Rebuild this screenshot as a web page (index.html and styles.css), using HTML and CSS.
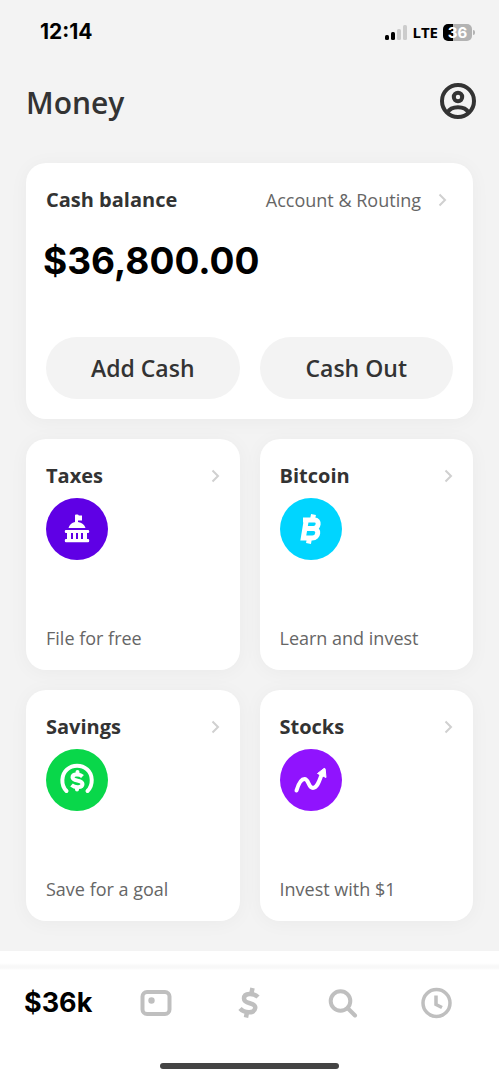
FILE: index.html
```html
<!DOCTYPE html>
<html lang="en">
<head>
<meta charset="utf-8">
<meta name="viewport" content="width=device-width, initial-scale=1">
<title>Money</title>
<link rel="stylesheet" href="styles.css">
</head>
<body>
<div class="app">
  <div class="status">
    <span class="time">12:14</span>
    <div class="signals">
      <svg class="bars" width="22" height="15" viewBox="0 0 22 15" aria-hidden="true">
        <rect x="0" y="10" width="4" height="5" rx="1.500"/>
        <rect x="6" y="7" width="4" height="8" rx="1.500"/>
        <rect class="dim" x="12" y="4" width="4" height="11" rx="1.500"/>
        <rect class="dim" x="18" y="0" width="4" height="15" rx="1.500"/>
      </svg>
      <span class="network">LTE</span>
      <span class="battery">36</span>
    </div>
  </div>

  <header class="header">
    <h1 class="title">Money</h1>
    <button class="icon-button" type="button" aria-label="Profile">
      <svg width="36" height="36" viewBox="0 0 36 36" fill="none" stroke="#333" stroke-width="4" aria-hidden="true">
        <circle cx="18" cy="18" r="16"/>
        <circle cx="18" cy="14" r="4.200" stroke-width="4"/>
        <path d="M7.500 29.500c2-3.800 6-5.300 10.500-5.300s8.500 1.500 10.500 5.300"/>
      </svg>
    </button>
  </header>

  <main class="content">
    <section class="card balance">
      <div class="card-head">
        <h2 class="card-title">Cash balance</h2>
        <a class="routing" href="#">Account &amp; Routing
          <svg class="chevron" width="9" height="14" viewBox="0 0 9 14" aria-hidden="true"><path d="M1.500 1.500 7 7l-5.500 5.500"/></svg>
        </a>
      </div>
      <p class="amount">$36,800.00</p>
      <div class="actions">
        <button class="pill" type="button">Add Cash</button>
        <button class="pill" type="button">Cash Out</button>
      </div>
    </section>

    <div class="tiles">
      <a class="card tile" href="#">
        <div class="card-head">
          <h2 class="card-title">Taxes</h2>
          <svg class="chevron" width="9" height="14" viewBox="0 0 9 14" aria-hidden="true"><path d="M1.500 1.500 7 7l-5.500 5.500"/></svg>
        </div>
        <svg class="badge" viewBox="0 0 62 62" aria-hidden="true">
          <circle cx="31" cy="31" r="31" fill="#5f00e5"/>
          <g fill="#fff">
            <path d="M29 17.500q0-1 1-1h1.500q1 0 1.300 1h3.200v5h-4v1.500c4 .8 6.500 2.800 7.500 6h-17c1-3.200 3.300-5.200 6.500-6z"/>
            <path d="M20 32h22q1.200 0 1.200 1.200v.6q0 1.200-1.200 1.200h-1v6h1q1.200 0 1.200 1.200v.8q0 1.200-1.200 1.200H20q-1.200 0-1.200-1.200v-.8q0-1.200 1.200-1.200h1v-6h-1q-1.200 0-1.200-1.200v-.6q0-1.200 1.200-1.200z"/>
          </g>
          <path d="M26 35v6M31 35v6M36 35v6" stroke="#5f00e5" stroke-width="2"/>
        </svg>
        <p class="caption">File for free</p>
      </a>

      <a class="card tile" href="#">
        <div class="card-head">
          <h2 class="card-title">Bitcoin</h2>
          <svg class="chevron" width="9" height="14" viewBox="0 0 9 14" aria-hidden="true"><path d="M1.500 1.500 7 7l-5.500 5.500"/></svg>
        </div>
        <svg class="badge" viewBox="0 0 62 62" aria-hidden="true">
          <circle cx="31" cy="31" r="31" fill="#00d5ff"/>
          <g fill="none" stroke="#fff" stroke-width="5">
            <path d="M23 22h11.500c5.500 0 4.500 8.500-1 8.500h-7M26.300 22l-3 18h9c6.500 0 7.500-9.500 1.200-9.500"/>
            <path d="M33.500 16.500l-1 5M29.500 40l-1 5.500"/>
          </g>
        </svg>
        <p class="caption">Learn and invest</p>
      </a>

      <a class="card tile" href="#">
        <div class="card-head">
          <h2 class="card-title">Savings</h2>
          <svg class="chevron" width="9" height="14" viewBox="0 0 9 14" aria-hidden="true"><path d="M1.500 1.500 7 7l-5.500 5.500"/></svg>
        </div>
        <svg class="badge" viewBox="0 0 62 62" aria-hidden="true">
          <circle cx="31" cy="31" r="31" fill="#09d74a"/>
          <g fill="none" stroke="#fff" stroke-width="4" stroke-linecap="round">
            <path d="M20.500 42c-6-6-5.200-16.500.5-21.500s14.500-5 20.200 0 6.300 15.500.3 21.500"/>
            <path d="M36.500 27.500c-2.500-2.500-10-3-10 .8 0 4.500 10 2.200 10 6.700 0 4-7.500 4-11 1" stroke-linecap="butt"/>
            <path d="M31.500 23.500v-.5M31 39.500v1"/>
          </g>
        </svg>
        <p class="caption">Save for a goal</p>
      </a>

      <a class="card tile" href="#">
        <div class="card-head">
          <h2 class="card-title">Stocks</h2>
          <svg class="chevron" width="9" height="14" viewBox="0 0 9 14" aria-hidden="true"><path d="M1.500 1.500 7 7l-5.500 5.500"/></svg>
        </div>
        <svg class="badge" viewBox="0 0 62 62" aria-hidden="true">
          <circle cx="31" cy="31" r="31" fill="#9013fe"/>
          <path d="M16.500 41.500c1.500-5 4.200-11.500 8-11.500 4.500 0 3.500 9 8.500 9 4 0 6-6 8.500-13" fill="none" stroke="#fff" stroke-width="4" stroke-linecap="round"/>
          <path d="M37.500 24.500l6.500-5q1-.5 1.200.7l.8 8.300z" fill="#fff" stroke="#fff" stroke-linejoin="round"/>
        </svg>
        <p class="caption">Invest with $1</p>
      </a>
    </div>
  </main>

  <footer class="dock">
    <nav class="tabs" aria-label="Main">
      <a class="tab tab-money" href="#">$36k</a>
      <a class="tab" href="#" aria-label="Card">
        <svg width="32" height="32" viewBox="0 0 32 32" fill="none" stroke="#bfbfbf" stroke-width="4" aria-hidden="true">
          <rect x="2.500" y="5" width="27" height="22" rx="4.500"/><circle cx="11.500" cy="13.500" r="3.200" fill="#bfbfbf" stroke="none"/>
        </svg>
      </a>
      <a class="tab" href="#" aria-label="Pay">
        <svg width="32" height="32" viewBox="0 0 32 32" fill="none" stroke="#bfbfbf" stroke-width="4.500" aria-hidden="true">
          <path d="M25 10c-4-4-14-4.500-14 1.500 0 6.500 12 3 11.200 9.500-.8 6-11 5-15.200.5"/><path d="M19.500 1l-1 5M14 25l-1 5.500"/>
        </svg>
      </a>
      <a class="tab" href="#" aria-label="Search">
        <svg width="32" height="32" viewBox="0 0 32 32" fill="none" stroke="#bfbfbf" stroke-width="4" stroke-linecap="round" aria-hidden="true">
          <circle cx="13.500" cy="14" r="9.800"/><path d="M21 21.500l7 7"/>
        </svg>
      </a>
      <a class="tab" href="#" aria-label="Activity">
        <svg width="32" height="32" viewBox="0 0 32 32" fill="none" stroke="#bfbfbf" stroke-width="3.500" aria-hidden="true">
          <circle cx="16.500" cy="16" r="13.500"/><path d="M16 8.500V17.500l6 3"/>
        </svg>
      </a>
    </nav>
    <div class="home-bar"></div>
  </footer>
</div>
</body>
</html>
```
FILE: styles.css
```css
* {
  box-sizing: border-box;
}

body {
  margin: 0;
  background: #f3f3f3;
  color: #333;
  font-family: "Open Sans", "Noto Sans", sans-serif;
}

h1, h2, p {
  margin: 0;
}

a {
  color: inherit;
  text-decoration: none;
}

button {
  padding: 0;
  border: 0;
  background: none;
  color: inherit;
  font: inherit;
}

svg {
  display: block;
  flex: none;
}

.app {
  display: flex;
  flex-direction: column;
  min-height: 100vh;
}

.status {
  display: flex;
  align-items: center;
  justify-content: space-between;
  padding: 20px 24px 20px 40px;
  color: #000;
  font-family: Inter, sans-serif;
  line-height: 24px;
}

.time {
  font-size: 21px;
  font-weight: 700;
}

.signals {
  display: flex;
  align-items: center;
  gap: 5px;
}

.bars .dim {
  fill: #ccc;
}

.network {
  font-family: "Open Sans", sans-serif;
  font-size: 15px;
  font-weight: 700;
}

.battery {
  position: relative;
  width: 29px;
  margin-right: 3px;
  border-radius: 5px;
  background: linear-gradient(90deg, #000 36%, #b3b3b3 36%);
  color: #fff;
  font-size: 15px;
  font-weight: 700;
  line-height: 17px;
  text-align: center;
}

.battery::after {
  content: "";
  position: absolute;
  top: 6px;
  right: -3px;
  width: 2px;
  height: 5px;
  border-radius: 0 2px 2px 0;
  background: #b3b3b3;
}

.header {
  display: flex;
  align-items: flex-start;
  justify-content: space-between;
  padding: 19px 23px 40px 26px;
}

.title {
  font-size: 30px;
  font-weight: 600;
  line-height: 40px;
}

.content {
  display: flex;
  flex: 1;
  flex-direction: column;
  gap: 20px;
  padding: 0 26px 30px;
}

.card {
  border-radius: 20px;
  background: #fff;
  box-shadow: 0 2px 20px rgba(0, 0, 0, 0.04);
}

.balance {
  padding: 24px 20px 20px;
}

.card-head {
  display: flex;
  align-items: center;
  justify-content: space-between;
}

.card-title {
  font-size: 20px;
  font-weight: 700;
  line-height: 26px;
}

.chevron {
  fill: none;
  stroke: #d0d0d0;
  stroke-width: 2;
}

.routing {
  display: flex;
  align-items: center;
  gap: 17px;
  padding-right: 6px;
  color: #666;
  font-size: 18px;
  line-height: 26px;
}

.amount {
  margin: 23px 0 51px -3px;
  color: #000;
  font-family: Inter, sans-serif;
  font-size: 37px;
  font-weight: 700;
  line-height: 50px;
}

.actions {
  display: grid;
  grid-template-columns: 1fr 1fr;
  gap: 20px;
}

.pill {
  height: 62px;
  border-radius: 31px;
  background: #f3f3f3;
  font-size: 23px;
  font-weight: 600;
}

.tiles {
  display: grid;
  grid-template-columns: 1fr 1fr;
  gap: 20px;
}

.tile {
  display: flex;
  flex-direction: column;
  min-height: 231px;
  padding: 24px 20px 20px;
}

.badge {
  width: 62px;
  height: 62px;
  margin-top: 9px;
}

.caption {
  margin-top: auto;
  color: #666;
  font-size: 18px;
  line-height: 24px;
}

.dock {
  display: flex;
  flex-direction: column;
  align-items: center;
  gap: 44px;
  padding: 17px 0 11px;
  background: linear-gradient(#fff 12px, #f8f8f8 15px, #f8f8f8 17px, #fff 19px);
}

.tabs {
  display: grid;
  grid-template-columns: repeat(5, 1fr);
  align-items: center;
  justify-items: center;
  width: 100%;
  padding: 19px 16px 0;
}

.tab-money {
  justify-self: start;
  padding-left: 8px;
  color: #000;
  font-family: Inter, sans-serif;
  font-size: 27px;
  font-weight: 700;
  line-height: 32px;
}

.home-bar {
  width: 36%;
  height: 6px;
  border-radius: 3px;
  background: #444;
}
```
